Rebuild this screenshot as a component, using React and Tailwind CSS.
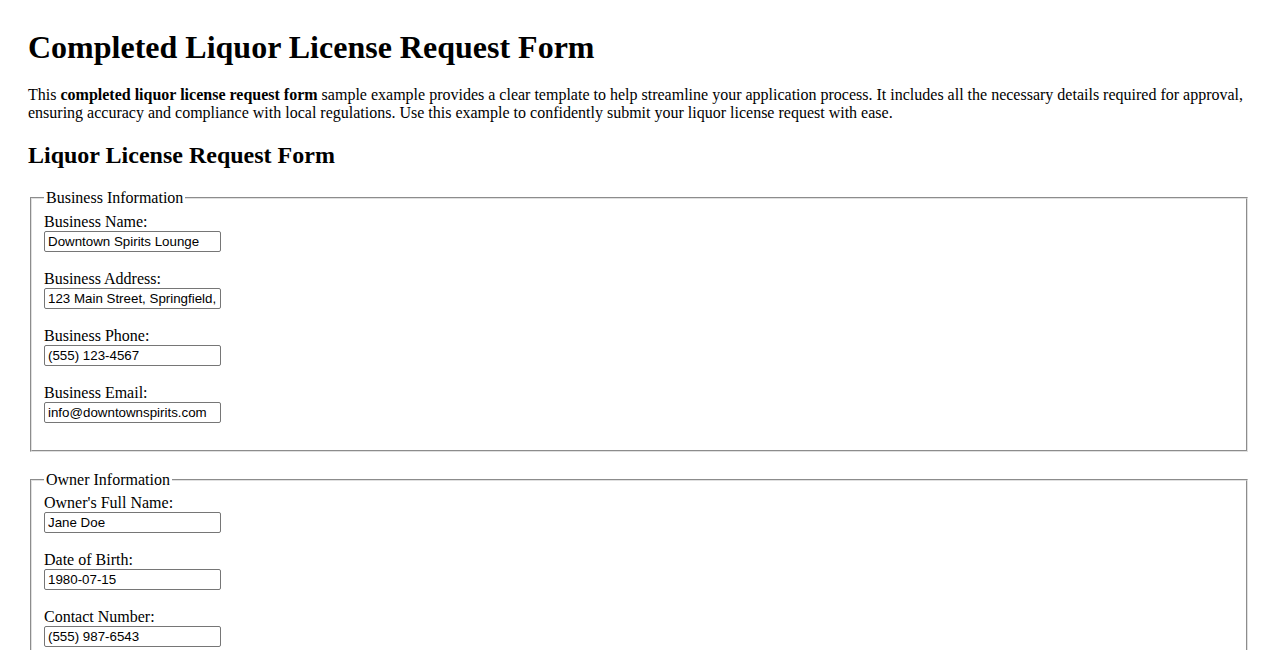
import React from "react";

function Field({ label, value }) {
  return (
    <>
      <label>{label}</label>
      <br />
      <input
        type="text"
        defaultValue={value}
        className="w-[177px] h-[21px] border border-[#767676] rounded-[2px] pl-[3px] pr-[2px] bg-white text-black text-[13.333px] align-baseline [font-family:'Liberation_Sans',Arial,sans-serif]"
      />
      <br />
      <br />
    </>
  );
}

function Fieldset({ legend, fields }) {
  return (
    <fieldset className="mx-[2px] mb-[19px] border-2 [border-style:groove] border-[#e0e0e0] pt-[5.6px] px-[12px] pb-[9px] min-w-0">
      <legend className="px-[2px]">{legend}</legend>
      {fields.map((f) => (
        <Field key={f[0]} label={f[0]} value={f[1]} />
      ))}
    </fieldset>
  );
}

export default function App() {
  return (
    <div className="bg-white text-black text-[16px] leading-[18px] [font-family:'Liberation_Serif','Times_New_Roman',serif] px-[28px] pt-[8px] pb-[20px]">
      <h1 className="text-[32px] font-bold leading-[36.8px] mt-[21.44px] mb-[19.5px]">
        Completed Liquor License Request Form
      </h1>
      <p className="my-[16px]">
        This <strong>completed liquor license request form</strong> sample example provides a clear template to help streamline your application process. It includes all the necessary details required for approval, ensuring accuracy and compliance with local regulations. Use this example to confidently submit your liquor license request with ease.
      </p>
      <h2 className="text-[24px] font-bold leading-[27.6px] mt-[19.92px] mb-[19.92px]">
        Liquor License Request Form
      </h2>
      <form>
        <Fieldset
          legend="Business Information"
          fields={[
            ["Business Name:", "Downtown Spirits Lounge"],
            ["Business Address:", "123 Main Street, Springfield, IL 62701"],
            ["Business Phone:", "(555) 123-4567"],
            ["Business Email:", "info@downtownspirits.com"],
          ]}
        />
        <Fieldset
          legend="Owner Information"
          fields={[
            ["Owner's Full Name:", "Jane Doe"],
            ["Date of Birth:", "1980-07-15"],
            ["Contact Number:", "(555) 987-6543"],
            ["Email Address:", "jane.doe@example.com"],
          ]}
        />
        <Fieldset
          legend="License Details"
          fields={[
            ["License Type:", "Full Liquor License"],
            ["Requested Start Date:", "2024-08-01"],
          ]}
        />
      </form>
    </div>
  );
}
